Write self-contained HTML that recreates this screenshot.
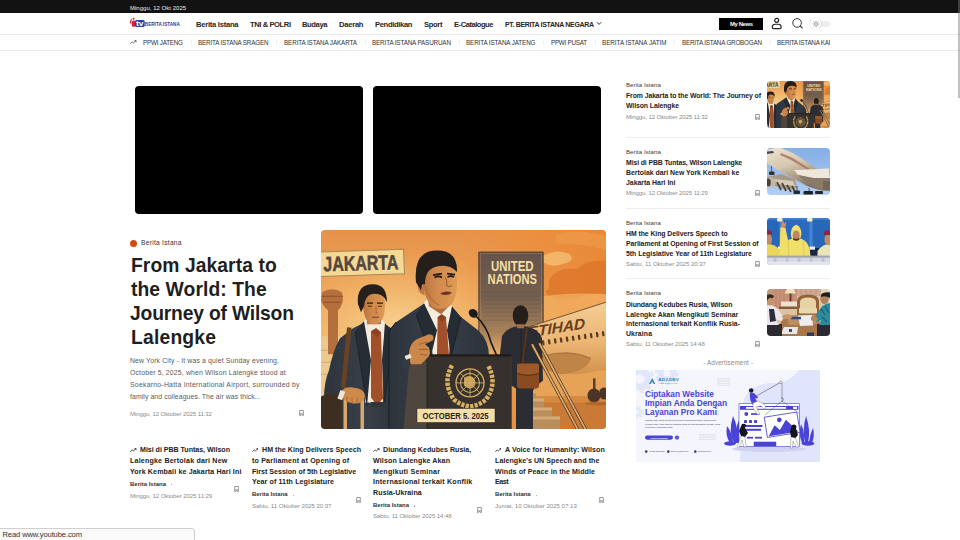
<!DOCTYPE html>
<html lang="id"><head><meta charset="utf-8"><title>Berita Istana</title>
<style>
*{box-sizing:border-box;margin:0;padding:0}
html,body{width:960px;height:540px;overflow:hidden;background:#fff;font-family:"Liberation Sans",sans-serif;color:#222}
.a{position:absolute;white-space:nowrap}
.b{position:absolute}
svg{display:block}
</style></head><body>
<div class="b" style="left:0;top:0;width:960px;height:13px;background:#121212"></div>
<div class="b" style="left:0;top:34px;width:960px;height:1px;background:#e9e9e9"></div>
<div class="b" style="left:0;top:50px;width:960px;height:1px;background:#e9e9e9"></div>
<!-- my news button -->
<div class="b" style="left:719.300px;top:17.700px;width:43.800px;height:12.200px;background:#000"></div>
<!-- videos -->
<div class="b" style="left:135px;top:86px;width:228px;height:128px;background:#000;border-radius:4px"></div>
<div class="b" style="left:373px;top:86px;width:228px;height:128px;background:#000;border-radius:4px"></div>
<!-- hero cat dot -->
<div class="b" style="left:130px;top:239.5px;width:7px;height:7px;border-radius:50%;background:#d4490f"></div>
<!-- sidebar dividers -->
<div class="b" style="left:626px;top:137px;width:204px;height:1px;background:#eee"></div>
<div class="b" style="left:626px;top:208px;width:204px;height:1px;background:#eee"></div>
<div class="b" style="left:626px;top:278px;width:204px;height:1px;background:#eee"></div>
<svg class="b" style="left:129px;top:17px" width="53" height="12" viewBox="0 0 53 12">
<path d="M0.800 6 Q1 2.500 3.200 1.800 Q2 4 2.300 7z" fill="#d8203a"/>
<circle cx="4.600" cy="1.700" r="1" fill="#d8203a"/>
<path d="M3.200 4 Q5 3.200 6.200 4 L6 9.600 Q4.500 10.200 3 9.300 Q2.300 7 3.200 4z" fill="#d8203a"/>
<rect x="6" y="3" width="9.700" height="7" rx="1.600" fill="#2340a8"/>
<text x="6.900" y="9" font-family="Liberation Sans, sans-serif" font-weight="bold" font-size="7.200" textLength="7.600" lengthAdjust="spacingAndGlyphs" fill="#fff">tv</text>
<text x="15.800" y="8.700" font-family="Liberation Sans, sans-serif" font-weight="bold" font-size="5.100" textLength="35" lengthAdjust="spacingAndGlyphs" fill="#2a3d9e">BERITA ISTANA</text>
</svg>
<svg class="b" style="left:596px;top:21px" width="6" height="5" viewBox="0 0 6 5"><path d="M0.800 1.200 L3 3.400 L5.200 1.200" fill="none" stroke="#333" stroke-width="1"/></svg>
<svg class="b" style="left:130px;top:40px" width="6.8" height="4.25" viewBox="0 0 8 5"><path d="M0.400 4.300 L2.600 2.300 L4 3.400 L7 0.900 M5.300 0.700 H7.200 V2.600" fill="none" stroke="#555" stroke-width="1"/></svg>
<svg class="b" style="left:130px;top:448px" width="6.8" height="4.25" viewBox="0 0 8 5"><path d="M0.400 4.300 L2.600 2.300 L4 3.400 L7 0.900 M5.300 0.700 H7.200 V2.600" fill="none" stroke="#333" stroke-width="1"/></svg>
<svg class="b" style="left:251.5px;top:448px" width="6.8" height="4.25" viewBox="0 0 8 5"><path d="M0.400 4.300 L2.600 2.300 L4 3.400 L7 0.900 M5.300 0.700 H7.200 V2.600" fill="none" stroke="#333" stroke-width="1"/></svg>
<svg class="b" style="left:373px;top:448px" width="6.8" height="4.25" viewBox="0 0 8 5"><path d="M0.400 4.300 L2.600 2.300 L4 3.400 L7 0.900 M5.300 0.700 H7.200 V2.600" fill="none" stroke="#333" stroke-width="1"/></svg>
<svg class="b" style="left:494.5px;top:448px" width="6.8" height="4.25" viewBox="0 0 8 5"><path d="M0.400 4.300 L2.600 2.300 L4 3.400 L7 0.900 M5.300 0.700 H7.200 V2.600" fill="none" stroke="#333" stroke-width="1"/></svg>
<svg class="b" style="left:771px;top:16.800px" width="12" height="13" viewBox="0 0 12 13"><circle cx="5.700" cy="3.300" r="2" fill="none" stroke="#222" stroke-width="1.150"/><path d="M1.200 10.300 Q1.200 7.200 4 7.200 H7.400 Q10.200 7.200 10.200 10.300 Q10.200 11.600 8.800 11.600 H2.600 Q1.200 11.600 1.200 10.300z" fill="none" stroke="#222" stroke-width="1.150"/></svg>
<svg class="b" style="left:791px;top:17px" width="13" height="13" viewBox="0 0 13 13"><circle cx="6.100" cy="5.900" r="4.300" fill="none" stroke="#333" stroke-width="1"/><path d="M9.200 9 L11.600 11.300" stroke="#333" stroke-width="1.100"/></svg>
<div class="b" style="left:812px;top:20.500px;width:18px;height:6px;border-radius:3px;background:#eee"></div>
<div class="b" style="left:809.800px;top:17.700px;width:11.600px;height:11.600px;border-radius:50%;background:#fff;box-shadow:0 0 2px rgba(0,0,0,.18)"></div>
<svg class="b" style="left:811.600px;top:19.500px" width="8" height="8" viewBox="0 0 8 8"><circle cx="4" cy="4" r="1.500" fill="none" stroke="#777" stroke-width=".7"/><path d="M4 .6v1.100M4 6.300v1.100M.6 4h1.100M6.300 4h1.100M1.600 1.600l.8 .8M5.600 5.600l.8 .8M6.400 1.600l-.8 .8M2.400 5.600l-.8 .8" stroke="#777" stroke-width=".7"/></svg>
<svg class="b" style="left:299px;top:410px" width="5" height="6.500" viewBox="0 0 5 6.500"><path d="M0.700 .5 H4.300 V5.800 L2.500 4.600 L0.700 5.800z M0.700 3.900 H4.300" fill="none" stroke="#666" stroke-width=".65"/></svg>
<svg class="b" style="left:755px;top:113.8px" width="5" height="6.500" viewBox="0 0 5 6.500"><path d="M0.700 .5 H4.300 V5.800 L2.500 4.600 L0.700 5.800z M0.700 3.900 H4.300" fill="none" stroke="#666" stroke-width=".65"/></svg>
<svg class="b" style="left:755px;top:190px" width="5" height="6.500" viewBox="0 0 5 6.500"><path d="M0.700 .5 H4.300 V5.800 L2.500 4.600 L0.700 5.800z M0.700 3.900 H4.300" fill="none" stroke="#666" stroke-width=".65"/></svg>
<svg class="b" style="left:755px;top:260.6px" width="5" height="6.500" viewBox="0 0 5 6.500"><path d="M0.700 .5 H4.300 V5.800 L2.500 4.600 L0.700 5.800z M0.700 3.900 H4.300" fill="none" stroke="#666" stroke-width=".65"/></svg>
<svg class="b" style="left:755px;top:341.4px" width="5" height="6.500" viewBox="0 0 5 6.500"><path d="M0.700 .5 H4.300 V5.800 L2.500 4.600 L0.700 5.800z M0.700 3.900 H4.300" fill="none" stroke="#666" stroke-width=".65"/></svg>
<svg class="b" style="left:234.4px;top:486px" width="5" height="6.500" viewBox="0 0 5 6.500"><path d="M0.700 .5 H4.300 V5.800 L2.500 4.600 L0.700 5.800z M0.700 3.900 H4.300" fill="none" stroke="#666" stroke-width=".65"/></svg>
<svg class="b" style="left:355.5px;top:496.6px" width="5" height="6.500" viewBox="0 0 5 6.500"><path d="M0.700 .5 H4.300 V5.800 L2.500 4.600 L0.700 5.800z M0.700 3.900 H4.300" fill="none" stroke="#666" stroke-width=".65"/></svg>
<svg class="b" style="left:477px;top:507.3px" width="5" height="6.500" viewBox="0 0 5 6.500"><path d="M0.700 .5 H4.300 V5.800 L2.500 4.600 L0.700 5.800z M0.700 3.900 H4.300" fill="none" stroke="#666" stroke-width=".65"/></svg>
<svg class="b" style="left:598.6px;top:496.6px" width="5" height="6.500" viewBox="0 0 5 6.500"><path d="M0.700 .5 H4.300 V5.800 L2.500 4.600 L0.700 5.800z M0.700 3.900 H4.300" fill="none" stroke="#666" stroke-width=".65"/></svg>
<div class="b" style="left:190.5px;top:39px;width:1px;height:7px;background:#f2f2f2"></div>
<div class="b" style="left:276px;top:39px;width:1px;height:7px;background:#f2f2f2"></div>
<div class="b" style="left:364.5px;top:39px;width:1px;height:7px;background:#f2f2f2"></div>
<div class="b" style="left:458.5px;top:39px;width:1px;height:7px;background:#f2f2f2"></div>
<div class="b" style="left:543px;top:39px;width:1px;height:7px;background:#f2f2f2"></div>
<div class="b" style="left:594.5px;top:39px;width:1px;height:7px;background:#f2f2f2"></div>
<div class="b" style="left:674px;top:39px;width:1px;height:7px;background:#f2f2f2"></div>
<div class="b" style="left:769.5px;top:39px;width:1px;height:7px;background:#f2f2f2"></div>
<div class="b" style="left:171px;top:484px;width:1.400px;height:1.400px;border-radius:50%;background:#999"></div>
<div class="b" style="left:292.5px;top:494.8px;width:1.400px;height:1.400px;border-radius:50%;background:#999"></div>
<div class="b" style="left:414px;top:505.3px;width:1.400px;height:1.400px;border-radius:50%;background:#999"></div>
<div class="b" style="left:535.5px;top:494.8px;width:1.400px;height:1.400px;border-radius:50%;background:#999"></div>
<svg class="b" style="left:321px;top:229.500px;border-radius:4px" width="285" height="199.500" viewBox="0 0 285 199" preserveAspectRatio="none">
<defs>
<linearGradient id="hbg" x1="0" y1="0" x2="0" y2="1"><stop offset="0" stop-color="#e6924a"/><stop offset=".3" stop-color="#eca256"/><stop offset=".55" stop-color="#f1b468"/><stop offset="1" stop-color="#e09444"/></linearGradient>
<radialGradient id="hgl" cx=".27" cy=".5" r=".42"><stop offset="0" stop-color="#f9d596" stop-opacity=".95"/><stop offset="1" stop-color="#f3bb6c" stop-opacity="0"/></radialGradient>
<linearGradient id="hrt" x1="0" y1="0" x2="1" y2="0"><stop offset="0" stop-color="#ec8e3c" stop-opacity="0"/><stop offset=".45" stop-color="#ec8e3c" stop-opacity=".7"/><stop offset="1" stop-color="#ea8836" stop-opacity=".95"/></linearGradient>
<linearGradient id="unb" x1="0" y1="0" x2="0" y2="1"><stop offset="0" stop-color="#65534b"/><stop offset=".45" stop-color="#75604f"/><stop offset=".8" stop-color="#a98259"/><stop offset="1" stop-color="#e2aa6a"/></linearGradient>
<linearGradient id="pl" x1="0" y1="0" x2="0" y2="1"><stop offset="0" stop-color="#f3cd94"/><stop offset=".55" stop-color="#ecb673"/><stop offset="1" stop-color="#d2924e"/></linearGradient>
<linearGradient id="fc" x1="0" y1="0" x2="1" y2="0"><stop offset="0" stop-color="#b87440"/><stop offset=".45" stop-color="#d08a4c"/><stop offset="1" stop-color="#dc9a58"/></linearGradient>
<linearGradient id="su" x1="0" y1="0" x2="1" y2="0"><stop offset="0" stop-color="#2e343c"/><stop offset=".5" stop-color="#383f49"/><stop offset="1" stop-color="#2c323a"/></linearGradient>
</defs>
<g id="heroart">
<rect width="285" height="199" fill="url(#hbg)"/>
<rect x="140" width="145" height="199" fill="url(#hrt)"/>
<rect width="285" height="199" fill="url(#hgl)"/>
<!-- clouds right -->
<path d="M228 50 q8 -14 28 -11 q10 -10 29 -8 V64 q-14 -2 -26 3 q-18 5 -31 -1 q-6 -6 0 -7z" fill="#dd772b" opacity=".85"/>
<path d="M222 26 q14 -8 26 -2 q8 6 -6 10 q-12 4 -20 -2z" fill="#f4be74" opacity=".8"/>
<path d="M235 4 q20 -6 50 2 v14 q-30 -8 -50 -6z" fill="#eea252" opacity=".5"/>
<path d="M222 66 Q250 62 285 64 V76 L222 96z" fill="#f1b266" opacity=".75"/>
<!-- control tower -->
<rect x="0" y="106" width="24" height="62" fill="#ebc98f"/><path d="M0 120 h14 M0 132 h10 M0 144 h8" stroke="#d4ac74" stroke-width="1"/>
<path d="M1 62 q10 -6 20 0 l1 8 q-2 8 -5 10 v44 h-10 v-44 q-5 -4 -7 -10 z" fill="#b46f3c"/>
<path d="M1 66 h21 M2 72 h18" stroke="#8a4f28" stroke-width="1"/>

<!-- JAKARTA sign -->
<path d="M-2 22 L82.500 19.300 L83.500 43.700 L-2 46.400z" fill="#f5d893" stroke="#a8865a" stroke-width="1"/>
<text x="2.600" y="41.200" transform="rotate(-1.700 2.600 41.200)" font-family="Liberation Sans, sans-serif" font-weight="bold" font-size="20.500" textLength="75" lengthAdjust="spacingAndGlyphs" fill="#54463e" stroke="#54463e" stroke-width=".5">JAKARTA</text>
<!-- UN building -->
<rect x="157.800" y="22" width="64.400" height="100" fill="url(#unb)"/>
<rect x="159.300" y="23.500" width="61.400" height="80" fill="none" stroke="#b08a60" stroke-width=".6" opacity=".7"/>
<path d="M157.800 122 V22 H222.200 V100" fill="none" stroke="#4a3a32" stroke-width=".9"/>
<g stroke="#5a483e" stroke-width=".4" opacity=".6"><path d="M162 62h56M162 66h56M162 70h56M162 74h56M162 78h56M162 82h56M162 86h56M162 90h56"/></g>
<text x="170" y="41" font-family="Liberation Sans, sans-serif" font-weight="bold" font-size="13.800" textLength="42.500" lengthAdjust="spacingAndGlyphs" fill="#f5dfa2">UNITED</text>
<text x="166.600" y="53.800" font-family="Liberation Sans, sans-serif" font-weight="bold" font-size="13.800" textLength="49.400" lengthAdjust="spacingAndGlyphs" fill="#f5dfa2">NATIONS</text>
<!-- ground right -->
<path d="M210 140 H285 V199 H210z" fill="#e6a257"/>
<path d="M210 166 H285 V199 H210z" fill="#c87a36"/>
<path d="M210 166 H285 V172 H210z" fill="#d58a40"/>
<!-- plane -->
<path d="M204.600 97.700 L285 72 V138 Q262 146 240 143 L212 132z" fill="url(#pl)"/>
<path d="M204.600 97.700 L285 72" stroke="#6e4628" stroke-width=".9" fill="none"/>
<path d="M221 126 Q248 118 270 128 Q266 142 240 144 Q226 142 221 134z" fill="#bf8546"/>
<path d="M221 126 Q248 118 270 128" stroke="#8a5a30" stroke-width=".6" fill="none"/>
<g fill="#5e3c24" transform="translate(-2 2.200)"><rect x="223" y="107.700" width="2.300" height="5.200" rx="1" transform="rotate(-9 224 110)"/><rect x="229" y="106.800" width="2.300" height="5.200" rx="1" transform="rotate(-9 230 109)"/><rect x="235" y="105.900" width="2.300" height="5.200" rx="1" transform="rotate(-9 236 108)"/><rect x="241" y="105" width="2.300" height="5.200" rx="1" transform="rotate(-9 242 108)"/><rect x="247" y="104.100" width="2.300" height="5.200" rx="1" transform="rotate(-9 248 107)"/><rect x="253" y="103.200" width="2.300" height="5.200" rx="1" transform="rotate(-9 254 106)"/><rect x="259" y="102.300" width="2.300" height="5.200" rx="1" transform="rotate(-9 260 105)"/><rect x="265" y="101.400" width="2.300" height="5.200" rx="1" transform="rotate(-9 266 104)"/><rect x="271" y="100.500" width="2.300" height="5.200" rx="1" transform="rotate(-9 272 103)"/><rect x="277" y="99.600" width="2.300" height="5.200" rx="1" transform="rotate(-9 278 102)"/><rect x="283" y="98.700" width="2.300" height="5.200" rx="1" transform="rotate(-9 284 101)"/></g>
<text x="221.500" y="105" transform="rotate(-8.800 221.500 105) skewX(-8)" font-family="Liberation Sans, sans-serif" font-style="italic" font-weight="bold" font-size="15" textLength="58" lengthAdjust="spacingAndGlyphs" fill="#6a3c20">ETIHAD</text>
<!-- wheels -->
<rect x="272" y="148" width="2.500" height="12" fill="#5a3e2c"/>
<ellipse cx="273" cy="165" rx="6.500" ry="7" fill="#4c3528"/><ellipse cx="283" cy="163" rx="5" ry="6" fill="#4c3528"/>
<ellipse cx="276" cy="173" rx="12" ry="2" fill="#a86028" opacity=".7"/>
<!-- stairs -->
<path d="M197 160 h18 v8 h8 v9 h8 v9 h8 v13 H197z" fill="#b98d5c"/>
<path d="M197 160 h18 v3 h-18z M197 168 h26 v3 h-26z M197 177 h34 v3 h-34z M197 186 h42 v3 h-42z" fill="#d4ac78"/>
<!-- man 3 -->
<path d="M181 106 Q185 98 196 96 h8 Q218 98 221 108 L222 150 Q214 156 212 160 V199 H195 V158 Q182 150 177 140z" fill="#2b2d33"/>
<path d="M200 98 V158" stroke="#1d1f24" stroke-width=".8"/>
<ellipse cx="199.500" cy="85.500" rx="7.800" ry="10.500" fill="#261e1a"/>
<rect x="196" y="94" width="7" height="4" fill="#a86c40"/>
<path d="M206 98 L201 136" stroke="#5e3418" stroke-width="1.700"/>
<rect x="196" y="133" width="22" height="25" rx="3" fill="#8a4a22"/>
<path d="M196 134 h22 v9 q-11 4 -22 0z" fill="#9c5a2a"/>
<path d="M196 143 q11 4 22 0" stroke="#54290f" stroke-width=".9" fill="none"/>
<path d="M211 114 L256.800 199 M218.300 113 L264.600 199" stroke="#4e3420" stroke-width="3.200"/>
<path d="M211 114 L256.800 199 M218.300 113 L264.600 199" stroke="#d9aa6c" stroke-width="1.800"/>
<!-- man 2 (left) -->
<path d="M3 199 V168 Q3 152 8 140 Q12 120 19 108 L32 98 L44 92 L64 94 L80 104 Q86 112 86 140 V199z" fill="url(#su)"/>
<path d="M43 91 L44 172 H62 L64 93 L60 88 H46z" fill="#f3ecdc"/>
<path d="M50 101 l5 -3 l5 4 l2 66 l-6 7 l-6 -8z" fill="#a2502a"/>
<path d="M50 101 l5 -3 l5 4 l-4 5z" fill="#8c4222"/>
<path d="M43 91 L34 101 L46 176 L50 130z M64 93 L72 102 L63 176 L61 130z" fill="#272d35"/>
<path d="M34 101 L46 176 M72 102 L63 176" stroke="#161c26" stroke-width=".7" fill="none"/>
<rect x="46" y="84" width="14" height="10" fill="#b9733f"/>
<path d="M42 66 Q41 94 53 94 Q64 94 64 74 Q64 62 53 60 Q42 60 42 66z" fill="url(#fc)"/>
<path d="M37 74 Q35 54 52 54 Q66 54 66 72 Q62 62 50 64 Q44 66 43 76 L40 82z" fill="#271f1b"/>
<path d="M46 73 h6 M56 73 h6" stroke="#2a1c14" stroke-width="1.300"/>
<path d="M47 76 h4 M57 76 h4" stroke="#3a2418" stroke-width=".9"/>
<path d="M55 76 v7 h2" stroke="#a4622f" stroke-width=".8" fill="none"/>
<path d="M51 87 h7" stroke="#7a3e28" stroke-width="1.100"/>
<path d="M26 97 L30.500 97.500 L24.500 158 L20 157z" fill="#6a4222"/>
<path d="M0 166 Q12 160 21 168 V199 H0z" fill="#3e2e20"/>
<rect x="22.500" y="164" width="3.500" height="35" fill="#dba66a"/><rect x="39.500" y="164" width="3.500" height="35" fill="#dba66a"/><rect x="22" y="161.500" width="21.500" height="4" rx="1.500" fill="#4e3828"/>
<path d="M20 162 Q22 156 32 157 Q44 158 44 166 Q42 174 32 173 Q22 172 20 162z" fill="#cd8a4a"/>
<path d="M26 166 v6 M31 167 v6 M36 167 v6" stroke="#9c5e2e" stroke-width=".7"/>
<rect x="18" y="160" width="5" height="9" fill="#efe6d4" transform="rotate(20 20 164)"/>
<rect x="50" y="171.500" width="14" height="5" fill="#33343a"/>
<!-- man 1 (centre) -->
<path d="M68 199 V101 L75 92 L102 74 H128 L139 86 L157 100 Q168 110 168 126 V199z" fill="url(#su)"/>
<path d="M68 199 V101 L75 92" stroke="#161c26" stroke-width="1" fill="none"/>
<path d="M103 72 L112 126 H128 L131 76 L126 68 H108z" fill="#f4eddc"/>
<path d="M116.600 87 l4 -3 l4.400 3 l3 38 h-12z" fill="#a2502a"/>
<path d="M116.600 87 l4 -3 l4.400 3 l-4 5z" fill="#8c4222"/>
<path d="M103 73 L95 84 L110 126 L116 100z M131 76 L140 87 L130 126 L126 100z" fill="#262c34"/>
<path d="M95 84 L110 126 M140 87 L130 126" stroke="#141a24" stroke-width=".8"/>
<path d="M106 62 h22 v14 l-8 8 l-12 -8z" fill="#b46e3c"/>
<path d="M97 50 q-2 13 6.500 15 v-15z" fill="#c07a42"/>
<path d="M100 42 Q100 30 116 30 Q136 30 136 52 Q136 68 129.500 75.500 Q121 81.500 111 76.500 Q102 67 100 42z" fill="url(#fc)"/>
<path d="M95 52 Q92 20.500 116 20.500 Q137 20.500 136 42 Q128 33 114 37 Q104 40 104 54 L101 54 L100 60z" fill="#261e1a"/>
<path d="M112 45 l9 -1.500 M126 43.500 l8 1" stroke="#231811" stroke-width="1.600"/>
<path d="M113.500 47.300 q4 -2.200 7.500 0 M126.500 46.800 q3.200 -1.800 6.500 0" stroke="#24160e" stroke-width="1.700" fill="none"/>
<path d="M124.500 47 q2 5 1 8.500 q2.500 1.800 5.500 0" stroke="#9c5a2c" stroke-width="1" fill="none"/>
<path d="M119 63.500 q6 -3.500 12 -1 q-5 4 -12 1z" fill="#6e3422"/>
<path d="M104 56 q4 14 14 19" stroke="#a8663a" stroke-width="1.500" fill="none" opacity=".7"/>
<!-- mic -->
<ellipse cx="152.300" cy="83" rx="4.800" ry="4" transform="rotate(35 152 83)" fill="#1c1a1a"/>
<path d="M155 86 Q166 96 170 112 L176 126" stroke="#1c1a1a" stroke-width="1.700" fill="none"/>
<!-- podium -->
<path d="M89 125 H190.500 V199 H82.500z" fill="#4e463f"/>
<rect x="106" y="125" width="84.500" height="74" fill="#37312e"/>
<path d="M106 125 V199" stroke="#231e1c" stroke-width=".8"/>
<rect x="88" y="124" width="102.500" height="2.200" fill="#1f1b19"/>
<!-- hand -->
<path d="M88 128 Q87 112 98 108 L108 104 Q114 104 112 110 L104 114 Q111 118 108 126 L100 134 H90z" fill="#cb884a"/>
<path d="M98 114 l8 -2 M98 119 l9 0 M99 124 l7 1" stroke="#95582c" stroke-width=".8"/>
<rect x="82" y="126" width="7" height="11" fill="#343a42"/>
<rect x="84" y="124.500" width="6" height="4" fill="#efe6d4" transform="rotate(-20 87 126)"/>
<!-- emblem -->
<g fill="none" stroke="#d8b062"><circle cx="149" cy="152.500" r="14" stroke-width="1.300"/><circle cx="149" cy="152.500" r="9.500" stroke-width="1"/><circle cx="149" cy="152.500" r="5" stroke-width="1"/><path d="M135 152.500 h28 M149 138.500 v28 M139 142.500 l20 20 M159 142.500 l-20 20" stroke-width=".8"/>
<path d="M131 135 Q121 153 133 169 Q140 175 149 176 Q158 175 165 169 Q177 153 167 135" stroke-width="4.500" stroke-dasharray="3.200 1.300"/></g>
<path d="M143 148 q4 -4 9 -1 q4 4 0 9 q-5 3 -9 -1z" fill="#d8b062" opacity=".85"/>
<!-- label -->
<rect x="96" y="178" width="78" height="14" fill="#f3dea8" stroke="#2a2320" stroke-width=".5"/>
<text x="101.600" y="188.800" font-family="Liberation Sans, sans-serif" font-weight="bold" font-size="9" textLength="66" lengthAdjust="spacingAndGlyphs" fill="#2a2320">OCTOBER 5. 2025</text>
</g>
</svg>

<svg class="b" style="left:767px;top:81px;border-radius:4px" width="63" height="47" viewBox="40.400 20.500 203.200 151.500" preserveAspectRatio="xMidYMid slice"><use href="#heroart"/></svg>
<svg class="b" style="left:767px;top:148px;border-radius:4px" width="63" height="47" viewBox="0 0 63 47">
<defs><linearGradient id="sky2" x1="0" y1="0" x2="0" y2="1"><stop offset="0" stop-color="#84aee6"/><stop offset="1" stop-color="#b2cef2"/></linearGradient>
<linearGradient id="fu2" x1="0" y1="0" x2=".45" y2="1"><stop offset="0" stop-color="#ece4d2"/><stop offset=".45" stop-color="#d6c8b0"/><stop offset=".8" stop-color="#a08e78"/><stop offset="1" stop-color="#7c6c5a"/></linearGradient></defs>
<rect width="63" height="47" fill="url(#sky2)"/>
<!-- left wing + engines -->
<path d="M0 29 L14 26 L28 31 L30 40 L20 42 L8 38 L0 37z" fill="#a89a88"/>
<path d="M6 31 L26 33 L28 38 L10 36z" fill="#d8ccb8"/>
<!-- fuselage -->
<path d="M0 2 L8 0 H14 L26 5 L40 14 L50 21 L63 23 V43 L52 42 L40 38 L28 31 L14 24 L4 18 L0 15z" fill="url(#fu2)"/>
<path d="M14 5 L25 9.500 L43 21 L41 22 L23 11.500 L13 7z" fill="#a66a5c" opacity=".75"/>
<path d="M0 3.500 L6 3 L7 5 L0 6z" fill="#4a4a52"/>
<!-- right wing -->
<path d="M27 22 L62 20.500 L63 30 L46 30 L31 27z" fill="#efe8da"/>
<path d="M31 27 L46 30 L63 30 V43 L52 42 L42 36 L34 30z" fill="#8a7a68"/>
<rect x="56" y="33" width="7" height="9" fill="#74675a"/>
<!-- engines -->
<ellipse cx="4" cy="34.500" rx="4.500" ry="5" fill="#c4b8a6"/><ellipse cx="1.500" cy="34.500" rx="2.300" ry="4" fill="#4c433c"/>
<path d="M10 34 l4 8 M15 35 l4 8 M20 37 l4 7 M25 38 l3 6" stroke="#4a4038" stroke-width="1.700"/>
<!-- gear -->
<path d="M4.500 18 v6" stroke="#4a4440" stroke-width=".8"/><rect x="2" y="23.500" width="5.500" height="3.500" rx="1" fill="#34302e"/>
<path d="M30 38 v5 M42 40 v4" stroke="#3a3634" stroke-width=".8"/>
<rect x="26.500" y="42.500" width="6.500" height="3.400" rx="1" fill="#26282e"/><rect x="36.500" y="43" width="9.500" height="3.400" rx="1" fill="#1e2026"/><rect x="48" y="43" width="8" height="3" rx="1" fill="#26282e"/>
</svg>
<svg class="b" style="left:767px;top:218px;border-radius:4px" width="63" height="47" viewBox="0 0 63 47">
<rect width="63" height="47" fill="#2c6ec4"/>
<rect x="0" y="2" width="12" height="36" fill="#2866ba"/><rect x="16" y="2" width="26" height="36" fill="#2a6abf"/><rect x="46" y="2" width="17" height="36" fill="#2866ba"/>
<rect x="12.500" y="0" width="3" height="38" fill="#4584d4"/><rect x="42.500" y="0" width="3" height="38" fill="#4584d4"/>
<rect x="0" y="0" width="63" height="1.800" fill="#3f7fd0"/>
<rect x="10" y="0" width="5.500" height="3.600" rx="1" fill="#f5ecd2"/><rect x="40" y="0" width="5.500" height="3.600" rx="1" fill="#f5ecd2"/>
<rect x="11" y="30" width="7" height="8" fill="#182646"/><rect x="43" y="30" width="9" height="8" fill="#182646"/>
<rect x="11" y="28.500" width="5" height="3.200" fill="#eceef2"/><rect x="42.500" y="28.500" width="5.500" height="3.200" fill="#eceef2"/>
<!-- left man -->
<path d="M0 26 Q7 25 13 32 V38 H0z" fill="#ecd65a"/><path d="M0 16.500 h3 q2 1 2 5 q0 4 -2.500 5 h-2.500z" fill="#c08c64"/><path d="M0 12.500 h3.500 q1.500 .5 1.500 4 h-5z" fill="#98203e"/>
<!-- right man -->
<path d="M63 26 Q56 25.500 50.500 33 V38 H63z" fill="#e8e6b6"/><path d="M63 16.500 h-3 q-2.500 1 -2.500 5 q0 4.500 3 5.500 h2.500z" fill="#c08c64"/><path d="M63 12.500 h-4 q-2 .5 -2 4.500 h6z" fill="#98203e"/>
<!-- king -->
<path d="M12.500 38 L13.300 12 Q13 9 15 9 L18.500 10 L21 22 Q26 20 29 20 Q36 20 40 25 Q43 30 43.500 38z" fill="#f1df6a"/>
<path d="M21 22 L22 38 M36 22 L37 38" stroke="#d9c550" stroke-width=".8" fill="none"/>
<path d="M15 3 l1.500 0 l.5 3 l1.500 -2 l.8 .6 l-1.300 5.400 l-3.500 -.5z" fill="#c8946a"/>
<path d="M23.800 16 Q24 8 29.500 6.800 Q34.500 9 34.300 16 Q34 22 29 23 Q24 22 23.800 16z" fill="#f3e274"/>
<ellipse cx="29.200" cy="17.200" rx="3.500" ry="4.600" fill="#bc865e"/>
<path d="M26 19.500 q3.200 3 6.400 0 v2 q-3.200 2.500 -6.400 0z" fill="#4e3628"/>
<path d="M25.200 13.200 q4 -2 8 0" stroke="#e6ce4e" stroke-width="1" fill="none"/>
<!-- balustrade -->
<rect x="0" y="38" width="63" height="9" fill="#d4d8e2"/><rect x="0" y="37.600" width="63" height="2" fill="#a2a4ac"/>
<rect x="0" y="43.500" width="63" height="3.500" fill="#e4e6ee"/>
<path d="M8 40 v4 M20 40 v4 M32 40 v4 M44 40 v4 M56 40 v4" stroke="#c2c6d2" stroke-width="3"/>
</svg>
<svg class="b" style="left:767px;top:289px;border-radius:4px" width="63" height="47" viewBox="0 0 63 47">
<rect width="63" height="47" fill="#dcc6ac"/>
<rect x="5" y="0" width="25" height="20" fill="#c8927a"/><path d="M9 0v20M13 0v20M17 0v20M26 0v20" stroke="#b88068" stroke-width="1.100"/>
<rect x="0" y="0" width="6" height="16" fill="#bc9c7c"/>
<rect x="30" y="0" width="24" height="7" fill="#cfa892"/><path d="M34 0v7M39 0v7M44 0v7M49 0v7" stroke="#c09880" stroke-width="1"/>
<rect x="54" y="0" width="9" height="14" fill="#e4d2bc"/>
<path d="M17.500 4.500 L20 0 H27 L29 4.500z" fill="#f0e2c0"/><rect x="22.500" y="4.500" width="2" height="9" fill="#6a3c24"/>
<rect x="14" y="12.500" width="17" height="5.500" fill="#ece2d0"/><rect x="12" y="17.500" width="21" height="2.500" fill="#8a5a34"/>
<rect x="13" y="20" width="19" height="6" fill="#d8c4a4"/>
<!-- armchair -->
<path d="M30 26 V12 Q30 5.500 41 5.500 Q52 5.500 52 12 V26z" fill="#94633a"/>
<path d="M33 19 V13 Q33 8.500 41 8.500 Q49 8.500 49 13 V19z" fill="#e6d2a4"/><rect x="32" y="19" width="18" height="5.500" rx="1" fill="#ead8ae"/>
<!-- table -->
<path d="M15 27 L51 25 L55 47 H11z" fill="#a8784a"/>
<path d="M20 27 L48 26 L50 35 L22 36z" fill="#bc8e60"/>
<path d="M31 26.500 L45 26 L46 36.500 L33 37z" fill="#ededf0"/>
<path d="M17 38 L31 38 L30 45 L14 45z" fill="#e8e8ec"/>
<rect x="24" y="27.800" width="10" height="2.500" fill="#2c4a7a"/><rect x="22" y="40" width="3" height="3" fill="#3a4a6a"/>
<rect x="40" y="43.500" width="7" height="3.500" fill="#2a3a5a"/>
<!-- left man -->
<rect x="0" y="35" width="15" height="12" fill="#2a2a30"/>
<path d="M0 16.500 Q8 15 12 22 L17 28 L15 32 L8 30 L12 36 H0z" fill="#eae6ec"/>
<path d="M2 20 L7 20 L9 32 L3 33z" fill="#2c2c3c"/>
<ellipse cx="3.500" cy="11.500" rx="3.800" ry="5" fill="#c49468"/><path d="M0 6 Q4 4 7 7 Q6 10 4 9 Q2 8 0 12z" fill="#38281e"/>
<path d="M15 27 q4 -3 9 -1 l1 3 q-5 2 -9 1z" fill="#c89468"/>
<!-- right man -->
<rect x="50" y="35" width="13" height="12" fill="#2a2a30"/>
<path d="M63 14 Q54 15 51 24 L47 29 L50 33 L54 31 L52 36 H63z" fill="#2c8c9e"/>
<path d="M54 20 l4 6 M58 17 l4 7 M55 28 l5 5" stroke="#1c5c74" stroke-width="1.200"/>
<ellipse cx="57.500" cy="9.500" rx="4.200" ry="5.500" fill="#b4805c"/><path d="M54 6 Q56 2.500 63 3.500 V9 Q58 6 54 8z" fill="#1e1e22"/>
<path d="M44 28 q3 -2 6 0 l1 3 q-4 2 -7 0z" fill="#b88460"/>
</svg>

<svg class="b" style="left:636px;top:370px" width="184" height="92" viewBox="0 0 184 92" font-family="Liberation Sans, sans-serif">
<rect width="184" height="92" fill="#f5f6fd"/>
<!-- gears -->
<g fill="#e2e6fb"><circle cx="4" cy="9" r="11.500"/><circle cx="31" cy="3" r="9.500"/><circle cx="1" cy="42" r="5"/>
<g stroke="#e2e6fb" fill="none"><circle cx="4" cy="9" r="13" stroke-width="3" stroke-dasharray="4.500 3.700"/><circle cx="31" cy="3" r="10.800" stroke-width="2.600" stroke-dasharray="3.700 3.100"/><circle cx="1" cy="42" r="6" stroke-width="1.800" stroke-dasharray="2.100 2.100"/></g></g>
<g fill="#f5f6fd"><circle cx="4" cy="9" r="4.500"/><circle cx="31" cy="3" r="3.600"/><circle cx="1" cy="42" r="2"/></g>
<!-- blob -->
<path d="M163 0 Q152 14 136 13 Q113 14 108 30 Q101 50 105 70 L104 92 H184 V0z" fill="#e0e5fb"/>
<!-- logo -->
<path d="M13 14 L16.200 8 L19.400 14 H17.600 L16.200 11.500 L14.800 14z" fill="#3d8fb5"/>
<text x="22" y="11.200" font-size="4" font-weight="bold" textLength="21" lengthAdjust="spacingAndGlyphs" fill="#2f86b0">ADJ.DEV</text>
<text x="22.500" y="14" font-size="1.700" textLength="19" lengthAdjust="spacingAndGlyphs" fill="#5aa0c0">WEB SOLUTION</text>
<!-- headline -->
<g font-weight="bold" font-size="8.700" fill="#4a44d6">
<text x="9" y="27.200" textLength="69" lengthAdjust="spacingAndGlyphs">Ciptakan Website</text>
<text x="9" y="36" textLength="82" lengthAdjust="spacingAndGlyphs">Impian Anda Dengan</text>
<text x="9" y="44.500" textLength="72" lengthAdjust="spacingAndGlyphs">Layanan Pro Kami</text></g>
<g font-size="1.750" fill="#33354a">
<text x="9" y="51.300" textLength="71" lengthAdjust="spacingAndGlyphs">Jangan ragu untuk mempercayakan pembuatan website impian anda</text>
<text x="9" y="54.500" textLength="75" lengthAdjust="spacingAndGlyphs">kepada kami. Kami siap membantu anda mengembangkan website yang</text>
<text x="9" y="57.700" textLength="28" lengthAdjust="spacingAndGlyphs">memenuhi kebutuhan anda.</text></g>
<!-- button -->
<rect x="9" y="65.500" width="28" height="4.200" rx="2.100" fill="#4a44d6"/>
<text x="14.500" y="68.600" font-size="2.100" font-weight="bold" textLength="17" lengthAdjust="spacingAndGlyphs" fill="#fff">Pesan Sekarang!</text>
<circle cx="41" cy="67.600" r="2.100" fill="#4a44d6"/><path d="M40.400 66.700 l1 .9 l-1 .9" fill="none" stroke="#fff" stroke-width=".4"/>
<!-- hatch -->
<g stroke="#dcdde8" stroke-width=".7"><path d="M81 8.500h13M81 10.200h13M81 11.900h13M81 13.600h13M81 15.300h13"/><path d="M63 64.500h17M63 66.200h17M63 67.900h17M63 69.600h17"/></g>
<!-- contacts -->
<g fill="#3a3690"><circle cx="10.200" cy="81.600" r="1.300"/><circle cx="32.300" cy="81.600" r="1.300"/><circle cx="59.300" cy="81.600" r="1.300"/></g>
<g font-size="1.650" fill="#33354a"><text x="12.600" y="82.200" textLength="16" lengthAdjust="spacingAndGlyphs">+62 821 3630 2210</text><text x="34.700" y="82.200" textLength="17.500" lengthAdjust="spacingAndGlyphs">adjdev.id@gmail.com</text><text x="61.700" y="82.200" textLength="13" lengthAdjust="spacingAndGlyphs">Indonesia 57173</text></g>
<!-- shadow -->
<ellipse cx="133" cy="79" rx="37" ry="3" fill="#cfd3f0"/>
<!-- plants -->
<g fill="#4a44d6"><path d="M98 73 Q92 62 97 46 Q103 58 101 73z"/><path d="M101 73 Q98 60 103 50 Q106 62 103 73z"/><path d="M94 73 Q89 66 91 56 Q97 64 97 73z"/><ellipse cx="94" cy="73.500" rx="6" ry="2.200"/>
<path d="M169 73 Q166 60 170 46 Q175 60 172 73z"/><path d="M166 73 Q162 64 165 54 Q169 62 168 73z"/><path d="M173 73 Q174 64 177 58 Q179 66 176 73z"/><ellipse cx="172" cy="73.500" rx="6.500" ry="2.200"/></g>
<!-- browser -->
<rect x="103" y="33.700" width="60.500" height="42.600" fill="#fff" stroke="#4a44d6" stroke-width=".6"/>
<rect x="104" y="36" width="58.500" height="3.800" fill="#4a44d6"/>
<rect x="110" y="37" width="40" height="1.800" fill="#fff"/><rect x="157" y="36.800" width="4" height="2.200" fill="#fff"/>
<g fill="#4a44d6"><circle cx="110.300" cy="44" r="1.900"/><rect x="115" y="43.200" width="8.500" height="1.700"/><rect x="108" y="50" width="3" height="3" rx=".6"/><rect x="113" y="50" width="3" height="3" rx=".6"/><rect x="118" y="50" width="3" height="3" rx=".6"/><rect x="107.500" y="55" width="19" height="2"/><rect x="107.500" y="58.800" width="17.500" height="2"/><rect x="111" y="66.800" width="6" height="1.800"/><rect x="119" y="66.800" width="7" height="1.800"/><rect x="117.700" y="71.700" width="22.500" height="4.600"/></g>
<!-- image card -->
<g transform="rotate(-9 146 54)"><rect x="129.500" y="44.500" width="33" height="20.500" fill="#fff" stroke="#4a44d6" stroke-width=".8"/>
<path d="M131 64 L138.500 54 L143 59.500 L150.500 50.500 L161 64z" fill="#4a44d6"/><circle cx="144" cy="49.500" r="2.300" fill="#4a44d6"/></g>
<!-- hook & rod -->
<path d="M121.400 25.400 L144.500 12.400" stroke="#33354a" stroke-width=".5"/><circle cx="145" cy="12.400" r="1.300" fill="#fff" stroke="#33354a" stroke-width=".4"/>
<path d="M146 13.500 V28 M146 31 L129 45 M146 31 L163 43" stroke="#33354a" stroke-width=".4" fill="none"/><path d="M145 28.500 q1 -1.500 2 0 q.5 2.500 -1.500 2.800" stroke="#33354a" stroke-width=".7" fill="none"/>
<!-- person top -->
<circle cx="115.200" cy="20.500" r="2.300" fill="#1c1c28"/>
<path d="M114 23 Q118 22 120 25 L122 27 L121 28.500 L119 28 L122 33 L117 35 Q113 30 114 23z" fill="#4a44d6"/>
<path d="M117 33 L122 31 L128 34 L130 38 L128 39 L125 36 L120 37 L124 44 L122 45 L117 38z" fill="#fff" stroke="#33354a" stroke-width=".3"/>
<!-- persons bottom -->
<path d="M106 54 q3 -1 4 1 l-1 3 l3 5 l-3 4 l-4 -1 l-2 -5z" fill="#15151e"/>
<path d="M105 66 l4 1 l1 10 l-2 0 l-2 -7 l-3 8 l-2 -1z" fill="#fff" stroke="#33354a" stroke-width=".3"/>
<path d="M156 55 q3 -1.500 4.500 1 l-.5 3 l2 6 l-3 3.500 l-4 -1.500 l-1 -6z" fill="#15151e"/>
<path d="M155 67 l4.500 1 l3 9 l-2 .6 l-3.500 -6.500 l-.5 7 l-2 0z" fill="#fff" stroke="#33354a" stroke-width=".3"/>
</svg>

<!-- status bubble -->
<div class="b" style="left:-1px;top:528px;width:195.500px;height:14px;background:#fbfbfb;border:1px solid #cfcfcf;border-radius:0 3px 0 0"></div>
<div class="a" style="left:130.00px;top:5.00px;font-size:5.9px;line-height:7.67px;letter-spacing:0.073px;color:#f0f0f0;">Minggu, 12 Okt 2025</div>
<div class="a" style="left:196.00px;top:20.00px;font-size:7.6px;line-height:9.88px;letter-spacing:-0.258px;color:#262626;font-weight:bold;">Berita Istana</div>
<div class="a" style="left:250.00px;top:20.00px;font-size:7.6px;line-height:9.88px;letter-spacing:-0.414px;color:#262626;font-weight:bold;">TNI &amp; POLRI</div>
<div class="a" style="left:302.00px;top:20.00px;font-size:7.6px;line-height:9.88px;letter-spacing:-0.388px;color:#262626;font-weight:bold;">Budaya</div>
<div class="a" style="left:339.00px;top:20.00px;font-size:7.6px;line-height:9.88px;letter-spacing:-0.250px;color:#262626;font-weight:bold;">Daerah</div>
<div class="a" style="left:375.00px;top:20.00px;font-size:7.6px;line-height:9.88px;letter-spacing:-0.335px;color:#262626;font-weight:bold;">Pendidikan</div>
<div class="a" style="left:424.00px;top:20.00px;font-size:7.6px;line-height:9.88px;letter-spacing:-0.332px;color:#262626;font-weight:bold;">Sport</div>
<div class="a" style="left:454.00px;top:20.00px;font-size:7.6px;line-height:9.88px;letter-spacing:-0.481px;color:#262626;font-weight:bold;">E-Catalogue</div>
<div class="a" style="left:505.00px;top:20.00px;font-size:7.0px;line-height:9.1px;letter-spacing:-0.341px;color:#262626;font-weight:bold;">PT. BERITA ISTANA NEGARA</div>
<div class="a" style="left:143.00px;top:39.00px;font-size:6.3px;line-height:8.19px;letter-spacing:-0.222px;color:#333;">PPWI JATENG</div>
<div class="a" style="left:198.00px;top:39.00px;font-size:6.3px;line-height:8.19px;letter-spacing:-0.182px;color:#333;">BERITA ISTANA SRAGEN</div>
<div class="a" style="left:284.00px;top:39.00px;font-size:6.3px;line-height:8.19px;letter-spacing:-0.106px;color:#333;">BERITA ISTANA JAKARTA</div>
<div class="a" style="left:372.00px;top:39.00px;font-size:6.3px;line-height:8.19px;letter-spacing:-0.138px;color:#333;">BERITA ISTANA PASURUAN</div>
<div class="a" style="left:466.00px;top:39.00px;font-size:6.3px;line-height:8.19px;letter-spacing:-0.118px;color:#333;">BERITA ISTANA JATENG</div>
<div class="a" style="left:551.00px;top:39.00px;font-size:6.3px;line-height:8.19px;letter-spacing:-0.264px;color:#333;">PPWI PUSAT</div>
<div class="a" style="left:602.00px;top:39.00px;font-size:6.3px;line-height:8.19px;letter-spacing:-0.032px;color:#333;">BERITA ISTANA JATIM</div>
<div class="a" style="left:682.00px;top:39.00px;font-size:6.3px;line-height:8.19px;letter-spacing:-0.212px;color:#333;">BERITA ISTANA GROBOGAN</div>
<div class="a" style="left:777.00px;top:39.00px;font-size:6.3px;line-height:8.19px;letter-spacing:-0.258px;color:#333;width:53.00px;overflow:hidden;">BERITA ISTANA KARANGANYAR</div>
<div class="a" style="left:730.00px;top:21.00px;font-size:5.9px;line-height:7.67px;letter-spacing:-0.370px;color:#fff;font-weight:bold;">My News</div>
<div class="a" style="left:141.00px;top:239.00px;font-size:6.6px;line-height:8.58px;letter-spacing:0.289px;color:#333;">Berita Istana</div>
<div class="a" style="left:131.00px;top:253.00px;font-size:19.3px;line-height:25.09px;letter-spacing:0.073px;color:#1f1f1f;font-weight:bold;">From Jakarta to</div>
<div class="a" style="left:131.00px;top:277.00px;font-size:19.3px;line-height:25.09px;letter-spacing:0.084px;color:#1f1f1f;font-weight:bold;">the World: The</div>
<div class="a" style="left:130.00px;top:301.00px;font-size:19.3px;line-height:25.09px;letter-spacing:-0.185px;color:#1f1f1f;font-weight:bold;">Journey of Wilson</div>
<div class="a" style="left:131.00px;top:325.00px;font-size:19.3px;line-height:25.09px;letter-spacing:0.201px;color:#1f1f1f;font-weight:bold;">Lalengke</div>
<div class="a" style="left:130.00px;top:357.00px;font-size:6.9px;line-height:8.97px;letter-spacing:0.136px;color:#5a5a5a;">New York City - It was a quiet Sunday evening,</div>
<div class="a" style="left:130.00px;top:369.00px;font-size:6.9px;line-height:8.97px;letter-spacing:0.155px;color:#5a5a5a;">October 5, 2025, when Wilson Lalengke stood at</div>
<div class="a" style="left:130.00px;top:381.00px;font-size:6.9px;line-height:8.97px;letter-spacing:0.232px;color:#5a5a5a;">Soekarno-Hatta International Airport, surrounded by</div>
<div class="a" style="left:130.00px;top:393.00px;font-size:6.9px;line-height:8.97px;letter-spacing:0.078px;color:#5a5a5a;">family and colleagues. The air was thick...</div>
<div class="a" style="left:130.00px;top:410.00px;font-size:6.1px;line-height:7.93px;letter-spacing:-0.117px;color:#8c8c8c;">Minggu, 12 Oktober 2025 11:32</div>
<div class="a" style="left:626.00px;top:81.00px;font-size:6.1px;line-height:7.93px;letter-spacing:0.048px;color:#3a3a3a;">Berita Istana</div>
<div class="a" style="left:626.00px;top:92.00px;font-size:6.9px;line-height:8.97px;letter-spacing:-0.096px;color:#222;font-weight:bold;">From Jakarta to the World: The Journey of</div>
<div class="a" style="left:626.00px;top:102.00px;font-size:6.9px;line-height:8.97px;letter-spacing:-0.094px;color:#222;font-weight:bold;">Wilson Lalengke</div>
<div class="a" style="left:626.00px;top:113.00px;font-size:6.1px;line-height:7.93px;letter-spacing:-0.117px;color:#8c8c8c;">Minggu, 12 Oktober 2025 11:32</div>
<div class="a" style="left:626.00px;top:148.00px;font-size:6.1px;line-height:7.93px;letter-spacing:0.048px;color:#3a3a3a;">Berita Istana</div>
<div class="a" style="left:626.00px;top:159.00px;font-size:6.9px;line-height:8.97px;letter-spacing:-0.113px;color:#222;font-weight:bold;">Misi di PBB Tuntas, Wilson Lalengke</div>
<div class="a" style="left:626.00px;top:169.00px;font-size:6.9px;line-height:8.97px;letter-spacing:0.006px;color:#222;font-weight:bold;">Bertolak dari New York Kembali ke</div>
<div class="a" style="left:626.00px;top:179.00px;font-size:6.9px;line-height:8.97px;letter-spacing:0.005px;color:#222;font-weight:bold;">Jakarta Hari Ini</div>
<div class="a" style="left:626.00px;top:189.00px;font-size:6.1px;line-height:7.93px;letter-spacing:-0.117px;color:#8c8c8c;">Minggu, 12 Oktober 2025 11:29</div>
<div class="a" style="left:626.00px;top:219.00px;font-size:6.1px;line-height:7.93px;letter-spacing:0.048px;color:#3a3a3a;">Berita Istana</div>
<div class="a" style="left:626.00px;top:230.00px;font-size:6.9px;line-height:8.97px;letter-spacing:-0.068px;color:#222;font-weight:bold;">HM the King Delivers Speech to</div>
<div class="a" style="left:626.00px;top:240.00px;font-size:6.9px;line-height:8.97px;letter-spacing:-0.064px;color:#222;font-weight:bold;">Parliament at Opening of First Session of</div>
<div class="a" style="left:626.00px;top:250.00px;font-size:6.9px;line-height:8.97px;letter-spacing:-0.031px;color:#222;font-weight:bold;">5th Legislative Year of 11th Legislature</div>
<div class="a" style="left:626.00px;top:260.00px;font-size:6.1px;line-height:7.93px;letter-spacing:-0.045px;color:#8c8c8c;">Sabtu, 11 Oktober 2025 20:37</div>
<div class="a" style="left:626.00px;top:289.00px;font-size:6.1px;line-height:7.93px;letter-spacing:0.048px;color:#3a3a3a;">Berita Istana</div>
<div class="a" style="left:626.00px;top:301.00px;font-size:6.9px;line-height:8.97px;letter-spacing:-0.118px;color:#222;font-weight:bold;">Diundang Kedubes Rusia, Wilson</div>
<div class="a" style="left:626.00px;top:311.00px;font-size:6.9px;line-height:8.97px;letter-spacing:0.025px;color:#222;font-weight:bold;">Lalengke Akan Mengikuti Seminar</div>
<div class="a" style="left:626.00px;top:320.00px;font-size:6.9px;line-height:8.97px;letter-spacing:0.008px;color:#222;font-weight:bold;">Internasional terkait Konflik Rusia-</div>
<div class="a" style="left:626.00px;top:330.00px;font-size:6.9px;line-height:8.97px;letter-spacing:0.120px;color:#222;font-weight:bold;">Ukraina</div>
<div class="a" style="left:626.00px;top:340.00px;font-size:6.1px;line-height:7.93px;letter-spacing:-0.089px;color:#8c8c8c;">Sabtu, 11 Oktober 2025 14:48</div>
<div class="a" style="left:703.20px;top:359.00px;font-size:6.3px;line-height:8.19px;letter-spacing:0.138px;color:#8a8a8a;">- Advertisement -</div>
<div class="a" style="left:140.00px;top:446.00px;font-size:7.1px;line-height:9.23px;letter-spacing:-0.034px;color:#222;font-weight:bold;">Misi di PBB Tuntas, Wilson</div>
<div class="a" style="left:130.00px;top:457.00px;font-size:7.1px;line-height:9.23px;letter-spacing:0.186px;color:#222;font-weight:bold;">Lalengke Bertolak dari New</div>
<div class="a" style="left:130.00px;top:468.00px;font-size:7.1px;line-height:9.23px;letter-spacing:0.125px;color:#222;font-weight:bold;">York Kembali ke Jakarta Hari Ini</div>
<div class="a" style="left:130.00px;top:481.00px;font-size:6.0px;line-height:7.8px;letter-spacing:-0.001px;color:#333;font-weight:bold;">Berita Istana</div>
<div class="a" style="left:130.00px;top:492.00px;font-size:6.1px;line-height:7.93px;letter-spacing:-0.109px;color:#8c8c8c;">Minggu, 12 Oktober 2025 11:29</div>
<div class="a" style="left:262.00px;top:446.00px;font-size:7.1px;line-height:9.23px;letter-spacing:0.032px;color:#222;font-weight:bold;">HM the King Delivers Speech</div>
<div class="a" style="left:252.00px;top:457.00px;font-size:7.1px;line-height:9.23px;letter-spacing:0.176px;color:#222;font-weight:bold;">to Parliament at Opening of</div>
<div class="a" style="left:252.00px;top:468.00px;font-size:7.1px;line-height:9.23px;letter-spacing:-0.009px;color:#222;font-weight:bold;">First Session of 5th Legislative</div>
<div class="a" style="left:252.00px;top:478.00px;font-size:7.1px;line-height:9.23px;letter-spacing:0.103px;color:#222;font-weight:bold;">Year of 11th Legislature</div>
<div class="a" style="left:252.00px;top:491.00px;font-size:6.0px;line-height:7.8px;letter-spacing:-0.035px;color:#333;font-weight:bold;">Berita Istana</div>
<div class="a" style="left:252.00px;top:502.00px;font-size:6.1px;line-height:7.93px;letter-spacing:-0.063px;color:#8c8c8c;">Sabtu, 11 Oktober 2025 20:37</div>
<div class="a" style="left:383.00px;top:446.00px;font-size:7.1px;line-height:9.23px;letter-spacing:0.018px;color:#222;font-weight:bold;">Diundang Kedubes Rusia,</div>
<div class="a" style="left:373.00px;top:457.00px;font-size:7.1px;line-height:9.23px;letter-spacing:0.107px;color:#222;font-weight:bold;">Wilson Lalengke Akan</div>
<div class="a" style="left:373.00px;top:468.00px;font-size:7.1px;line-height:9.23px;letter-spacing:0.245px;color:#222;font-weight:bold;">Mengikuti Seminar</div>
<div class="a" style="left:373.00px;top:478.00px;font-size:7.1px;line-height:9.23px;letter-spacing:0.210px;color:#222;font-weight:bold;">Internasional terkait Konflik</div>
<div class="a" style="left:373.00px;top:489.00px;font-size:7.1px;line-height:9.23px;letter-spacing:0.091px;color:#222;font-weight:bold;">Rusia-Ukraina</div>
<div class="a" style="left:373.00px;top:502.00px;font-size:6.0px;line-height:7.8px;letter-spacing:-0.001px;color:#333;font-weight:bold;">Berita Istana</div>
<div class="a" style="left:373.00px;top:512.00px;font-size:6.1px;line-height:7.93px;letter-spacing:-0.093px;color:#8c8c8c;">Sabtu, 11 Oktober 2025 14:48</div>
<div class="a" style="left:505.00px;top:446.00px;font-size:7.1px;line-height:9.23px;letter-spacing:0.049px;color:#222;font-weight:bold;">A Voice for Humanity: Wilson</div>
<div class="a" style="left:495.00px;top:457.00px;font-size:7.1px;line-height:9.23px;letter-spacing:0.052px;color:#222;font-weight:bold;">Lalengke&#x27;s UN Speech and the</div>
<div class="a" style="left:495.00px;top:468.00px;font-size:7.1px;line-height:9.23px;letter-spacing:0.086px;color:#222;font-weight:bold;">Winds of Peace in the Middle</div>
<div class="a" style="left:495.00px;top:478.00px;font-size:7.1px;line-height:9.23px;letter-spacing:-0.495px;color:#222;font-weight:bold;">East</div>
<div class="a" style="left:495.00px;top:491.00px;font-size:6.0px;line-height:7.8px;letter-spacing:-0.026px;color:#333;font-weight:bold;">Berita Istana</div>
<div class="a" style="left:495.00px;top:502.00px;font-size:6.1px;line-height:7.93px;letter-spacing:-0.020px;color:#8c8c8c;">Jumat, 10 Oktober 2025 07:13</div>
<div class="a" style="left:2.50px;top:530.00px;font-size:7.6px;line-height:9.88px;letter-spacing:-0.126px;color:#333;">Read www.youtube.com</div>
<!-- scrollbar -->
<div class="b" style="left:958px;top:0;width:2px;height:97.500px;background:rgba(120,120,120,.45)"></div>
</body></html>
